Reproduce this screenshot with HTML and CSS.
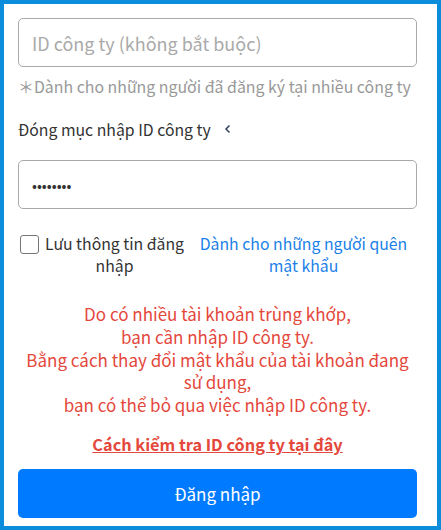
FILE: index.html
```html
<!DOCTYPE html>
<html lang="vi">
<head>
<meta charset="utf-8">
<link rel="stylesheet" href="styles.css">
</head>
<body>
<div class="frame">
  <div class="field">
    <input class="input" type="text" placeholder="ID công ty (không bắt buộc)">
  </div>
  <p class="hint">＊Dành cho những người đã đăng ký tại nhiều công ty</p>
  <div class="toggle">
    <span>Đóng mục nhập ID công ty</span>
    <svg class="chev" width="8" height="10" viewBox="0 0 8 10"><path d="M5.5 1.5 L2 5 L5.5 8.5" fill="none" stroke="#33415c" stroke-width="1.5"/></svg>
  </div>
  <div class="field pw">
    <input class="input" type="password" value="12345678">
  </div>
  <div class="row">
    <label class="remember">
      <span class="box"></span>
      <span class="rtext">Lưu thông tin đăng<br>nhập</span>
    </label>
    <a class="forgot" href="#">Dành cho những người quên<br>mật khẩu</a>
  </div>
  <p class="warn">Do có nhiều tài khoản trùng khớp,<br>bạn cần nhập ID công ty.<br>Bằng cách thay đổi mật khẩu của tài khoản đang<br>sử dụng,<br>bạn có thể bỏ qua việc nhập ID công ty.</p>
  <p class="how"><a href="#">Cách kiểm tra ID công ty tại đây</a></p>
  <button class="btn">Đăng nhập</button>
</div>
</body>
</html>
```

FILE: styles.css
```css
html, body {
  margin: 0;
  padding: 0;
  background: #ffffff;
}
body {
  font-family: "Noto Sans CJK JP", "Noto Sans", sans-serif;
  color: #333333;
}
.frame {
  box-sizing: border-box;
  width: 441px;
  height: 530px;
  border: 4px solid #0b8ddc;
  padding: 14px 20px 0 14px;
  display: flex;
  flex-direction: column;
}
.field {
  display: flex;
}
.input {
  box-sizing: border-box;
  width: 399px;
  height: 49px;
  border: 1px solid #aaaaaa;
  border-radius: 5px;
  padding: 0 13px;
  font-family: inherit;
  font-size: 18px;
  color: #333333;
  outline: none;
  background: #fff;
}
.input::placeholder {
  color: #aaaaaa;
}
.hint {
  margin: 8px 0 0 0;
  font-size: 15.9px;
  line-height: 24px;
  color: #999999;
  white-space: nowrap;
}
.toggle {
  margin-top: 18px;
  height: 24px;
  display: flex;
  align-items: center;
  gap: 13px;
  font-size: 15.8px;
  color: #333333;
}
.chev {
  display: block;
}
.pw {
  margin-top: 19px;
}
.pw .input {
  font-size: 14.5px;
  letter-spacing: 0;
}
.row {
  margin-top: 24px;
  display: flex;
  align-items: flex-start;
  font-size: 15.8px;
  line-height: 22px;
}
.remember {
  display: flex;
  align-items: flex-start;
  width: 172px;
}
.box {
  box-sizing: border-box;
  width: 19px;
  height: 19px;
  border: 1px solid #767676;
  border-radius: 3px;
  margin: 2px 0 0 2px;
  flex: none;
}
.rtext {
  flex: 1;
  text-align: center;
  color: #333333;
}
.forgot {
  flex: 1;
  text-align: center;
  color: #1a7fe8;
  text-decoration: none;
}
.warn {
  margin: 26px 0 0 0;
  text-align: center;
  color: #e4473b;
  font-size: 17px;
  line-height: 22.8px;
}
.how {
  margin: 15px 0 0 0;
  text-align: center;
  font-size: 16.3px;
  line-height: 24px;
  font-weight: bold;
}
.how a {
  color: #e4473b;
  text-decoration: underline;
}
.btn {
  margin-top: 13px;
  box-sizing: border-box;
  width: 399px;
  height: 49px;
  border: none;
  border-radius: 5px;
  background: #007bff;
  color: #ffffff;
  font-family: inherit;
  font-size: 17px;
}
```
